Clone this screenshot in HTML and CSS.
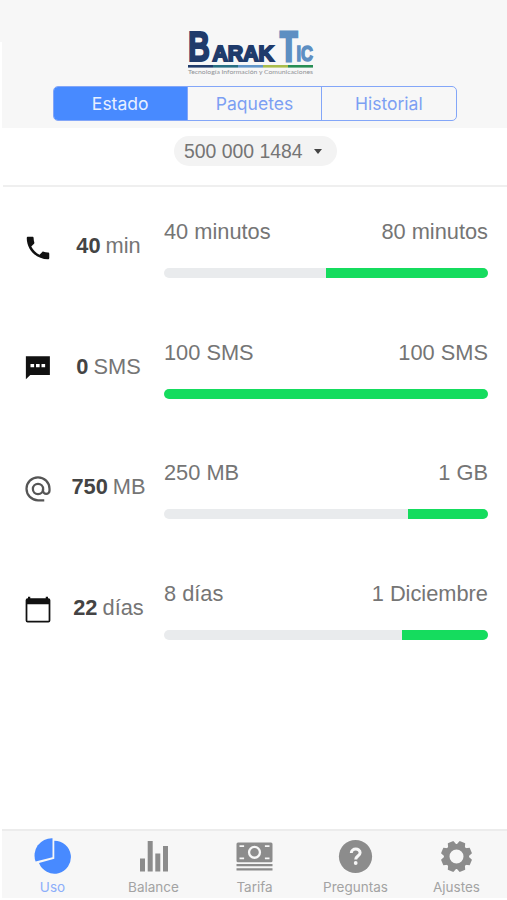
FILE: index.html
```html
<!doctype html>
<html lang="es">
<head>
  <meta charset="utf-8">
  <title>Barak Tic</title>
  <link rel="stylesheet" href="styles.css">
</head>
<body>
  <div class="app">
    <header class="header">
      <svg class="logo" width="128" height="50" viewBox="0 0 128 50">
        <g class="logo-name dark">
          <text x="1" y="34" font-size="43" textLength="22" lengthAdjust="spacingAndGlyphs">B</text>
          <text x="25.500" y="34" font-size="22" textLength="61.500" lengthAdjust="spacingAndGlyphs">ARAK</text>
        </g>
        <g class="logo-name light">
          <text class="logo-t" x="93" y="33.500" font-size="42" textLength="17.500" lengthAdjust="spacingAndGlyphs">T</text>
          <text x="109.500" y="34" font-size="22" textLength="16.500" lengthAdjust="spacingAndGlyphs">IC</text>
        </g>
        <path fill="#1f3b6b" d="M1 38h25v2.600H1z"/>
        <path fill="#286f83" d="M26 38h25v2.600H26z"/>
        <path fill="#6296c9" d="M51 38h25v2.600H51z"/>
        <path fill="#a9bd4b" d="M76 38h25v2.600H76z"/>
        <path fill="#278e54" d="M101 38h25v2.600h-25z"/>
        <text class="logo-sub" x="1" y="47" textLength="125" lengthAdjust="spacingAndGlyphs">Tecnología Información y Comunicaciones</text>
      </svg>
      <nav class="segments">
        <a class="segment active">Estado</a>
        <a class="segment">Paquetes</a>
        <a class="segment">Historial</a>
      </nav>
    </header>

    <div class="line-select">
      <div class="chip">500 000 1484 <span class="caret"></span></div>
    </div>

    <main class="usage">
      <div class="item">
        <svg class="icon" viewBox="0 0 24 24"><path d="M6.62 10.79c1.44 2.83 3.76 5.14 6.59 6.59l2.2-2.2c.27-.27.67-.36 1.02-.24 1.12.37 2.33.57 3.57.57.55 0 1 .45 1 1V20c0 .55-.45 1-1 1-9.39 0-17-7.61-17-17 0-.55.45-1 1-1h3.5c.55 0 1 .45 1 1 0 1.25.2 2.45.57 3.57.11.35.03.74-.25 1.02z"/></svg>
        <div class="amount"><b>40</b> min</div>
        <div class="detail">
          <div class="labels"><span>40 minutos</span><span>80 minutos</span></div>
          <div class="bar"><div class="fill" style="width:50%"></div></div>
        </div>
      </div>
      <div class="item">
        <svg class="icon" viewBox="0 0 24 24"><path d="M2.300 1.800h19.200v14.900H5.800L2.300 20.200z"/><path fill="#fff" d="M6 8h2.900v2.600H6zM10.400 8h2.900v2.600h-2.900zM14.800 8h2.900v2.600h-2.900z"/></svg>
        <div class="amount"><b>0</b> SMS</div>
        <div class="detail">
          <div class="labels"><span>100 SMS</span><span>100 SMS</span></div>
          <div class="bar"><div class="fill" style="width:100%"></div></div>
        </div>
      </div>
      <div class="item">
        <svg class="icon at" viewBox="0 0 24 24"><path d="M17 21H12a9.2 9.2 0 1 1 9.2-9.2v1.5a2.6 2.6 0 0 1-5.2 0V12"/><circle cx="12" cy="12" r="4.1"/></svg>
        <div class="amount"><b>750</b> MB</div>
        <div class="detail">
          <div class="labels"><span>250 MB</span><span>1 GB</span></div>
          <div class="bar"><div class="fill" style="width:24.7%"></div></div>
        </div>
      </div>
      <div class="item">
        <svg class="icon" viewBox="0 0 24 24"><path d="M4 1.300h1.800V2.500h12.400V1.300H20v1.200h.3A1.600 1.600 0 0 1 21.900 4.100v16.200a1.600 1.600 0 0 1-1.600 1.600H3.700a1.600 1.600 0 0 1-1.600-1.600V4.100A1.600 1.600 0 0 1 3.700 2.500H4zM3.500 7.400v13.100h17V7.400z" fill-rule="evenodd"/></svg>
        <div class="amount"><b>22</b> días</div>
        <div class="detail">
          <div class="labels"><span>8 días</span><span>1 Diciembre</span></div>
          <div class="bar"><div class="fill" style="width:26.5%"></div></div>
        </div>
      </div>
    </main>

    <footer class="tabbar">
      <a class="tab active">
        <svg viewBox="0 0 40 40"><path d="M20.500 2.200A17.300 17.300 0 0 0 3.600 25.500l16.900-4.300z"/><path d="M22.300 4.700V22.700L7 27.100A16.500 16.500 0 1 0 22.300 4.700z"/></svg>
        <span>Uso</span>
      </a>
      <a class="tab">
        <svg viewBox="0 0 40 40"><path d="M7 22.500h5V35.500H7zM14.700 5h5v30.500h-5zM22.300 17.500h5v18h-5zM30 10h5v25.500h-5z"/></svg>
        <span>Balance</span>
      </a>
      <a class="tab">
        <svg viewBox="0 0 40 40"><path fill-rule="evenodd" d="M4 6.500h33a1.500 1.500 0 0 1 1.500 1.500v16.700a1.500 1.500 0 0 1-1.500 1.500H4a1.500 1.500 0 0 1-1.500-1.500V8A1.500 1.500 0 0 1 4 6.500zM5.500 9.200V11h4.600V9.200zM30.900 9.200V11h4.600V9.200zM5.500 21.500v1.800h4.600v-1.800zM30.900 21.500v1.800h4.600v-1.800zM20.500 9.700a6.600 6.600 0 1 0 0 13.200 6.600 6.600 0 0 0 0-13.200zM20.500 12a4.300 4.300 0 1 1 0 8.600 4.300 4.300 0 0 1 0-8.600z"/><path d="M2.500 28h36v2.300h-36zM2.500 32.300h36v2.300h-36z"/></svg>
        <span>Tarifa</span>
      </a>
      <a class="tab">
        <svg viewBox="0 0 40 40"><circle cx="20.500" cy="20.500" r="16.600"/><path class="mark" d="M16.300 17c0-5.200 8.800-5.200 8.800-.3 0 3.200-4.400 3.400-4.400 6.700"/><circle cx="20.700" cy="27" r="1.900" fill="#f7f7f7"/></svg>
        <span>Preguntas</span>
      </a>
      <a class="tab">
        <svg viewBox="0 0 40 40">
          <circle class="gear-ring" cx="20.500" cy="20.500" r="9.800"/>
          <g transform="translate(.5 .5)">
            <path d="M15.500 9l1.500-4.500h6L24.500 9z" transform="rotate(22.5 20 20)"/>
            <path d="M15.500 9l1.500-4.500h6L24.500 9z" transform="rotate(67.5 20 20)"/>
            <path d="M15.500 9l1.500-4.500h6L24.500 9z" transform="rotate(112.5 20 20)"/>
            <path d="M15.500 9l1.500-4.500h6L24.500 9z" transform="rotate(157.5 20 20)"/>
            <path d="M15.500 9l1.500-4.500h6L24.500 9z" transform="rotate(202.5 20 20)"/>
            <path d="M15.500 9l1.500-4.500h6L24.500 9z" transform="rotate(247.5 20 20)"/>
            <path d="M15.500 9l1.500-4.500h6L24.500 9z" transform="rotate(292.5 20 20)"/>
            <path d="M15.500 9l1.500-4.500h6L24.500 9z" transform="rotate(337.5 20 20)"/>
          </g>
        </svg>
        <span>Ajustes</span>
      </a>
    </footer>
  </div>
</body>
</html>
```
FILE: styles.css
```css
* {
  box-sizing: border-box;
}
body {
  margin: 0;
  background: #fff;
  font-family: "Liberation Sans", Arial, sans-serif;
  color: #757575;
}
.app {
  display: flex;
  flex-direction: column;
  height: 900px;
  padding: 0 0 2px 2px;
  background: linear-gradient(#f7f7f7, #f7f7f7) no-repeat 0 0 / 100% 42px;
}

/* header */
.header {
  height: 128px;
  padding-top: 27px;
  background: #f7f7f7;
  flex: none;
}
.logo {
  display: block;
  margin-left: 185px;
  overflow: visible;
}
.logo-name {
  font-family: "Liberation Sans", Arial, sans-serif;
  font-weight: bold;
  stroke-width: 2;
}
.logo-name.dark {
  fill: #1f3b6b;
  stroke: #1f3b6b;
}
.logo-name.light {
  fill: #5d8fc2;
  stroke: #5d8fc2;
  stroke-width: 1.6;
}
.logo-t {
  stroke-width: 3;
}
.logo-sub {
  font-family: Lato, sans-serif;
  font-size: 6.5px;
  fill: #909296;
}
.segments {
  display: flex;
  width: 404px;
  height: 35px;
  margin: 9px 0 0 50.5px;
  border: 1px solid #83a6f8;
  border-radius: 5px;
  overflow: hidden;
}
.segment {
  flex: 1;
  border-left: 1px solid #83a6f8;
  font: 17.5px/33px Inter, sans-serif;
  text-align: center;
  color: #7c9ff3;
}
.segment.active {
  border-left: 0;
  background: #488aff;
  color: #e8f0ff;
}

/* phone number */
.line-select {
  display: flex;
  flex: none;
  height: 59px;
  margin-left: 1px;
  padding: 8px 0 0 171px;
  border-bottom: 2px solid #efefef;
}
.chip {
  display: flex;
  align-items: center;
  width: 163px;
  height: 30px;
  padding-left: 10px;
  border-radius: 15px;
  background: #f3f3f3;
  font-size: 19.4px;
}
.caret {
  margin-left: 11px;
  border: 4.5px solid transparent;
  border-top: 5px solid #444;
  border-bottom: 0;
}

/* usage rows */
.usage {
  flex: 1;
  padding: 31px 19px 0 22px;
}
.item {
  display: grid;
  grid-template-columns: 28px 85px 324px;
  column-gap: 13.5px;
  height: 120.5px;
  font-size: 21.8px;
}
.icon {
  width: 30px;
  height: 30px;
  margin-top: 15px;
  margin-left: -1.5px;
  fill: #111;
}
.icon.at {
  fill: none;
  stroke: #555;
  stroke-width: 1.8;
}
.amount {
  padding: 15px 0 0 1px;
  line-height: 25px;
  text-align: center;
  word-spacing: -1px;
  white-space: nowrap;
}
.amount b {
  color: #444;
}
.labels {
  display: flex;
  justify-content: space-between;
  line-height: 26px;
  padding-top: 1px;
}
.bar {
  display: flex;
  justify-content: flex-end;
  height: 10px;
  margin-top: 23px;
  border-radius: 5px;
  background: #e9ebed;
  overflow: hidden;
}
.fill {
  background: #15dc5e;
}

/* bottom tabs */
.tabbar {
  display: flex;
  flex: none;
  height: 69px;
  border-top: 2px solid #ececec;
  background: #f7f7f7;
}
.tab {
  display: flex;
  flex: 1;
  flex-direction: column;
  align-items: center;
  font: 13.5px/16px Inter, sans-serif;
  color: #a3a3a3;
}
.tab svg {
  width: 40px;
  height: 40px;
  margin: 5px 1px 3px 0;
  fill: #8c8c8c;
}
.tab.active {
  color: #8caefa;
}
.tab.active svg {
  fill: #488aff;
}
.mark {
  fill: none;
  stroke: #f7f7f7;
  stroke-width: 3;
}
.tab .gear-ring {
  fill: none;
  stroke: #8c8c8c;
  stroke-width: 5.6;
}
```
